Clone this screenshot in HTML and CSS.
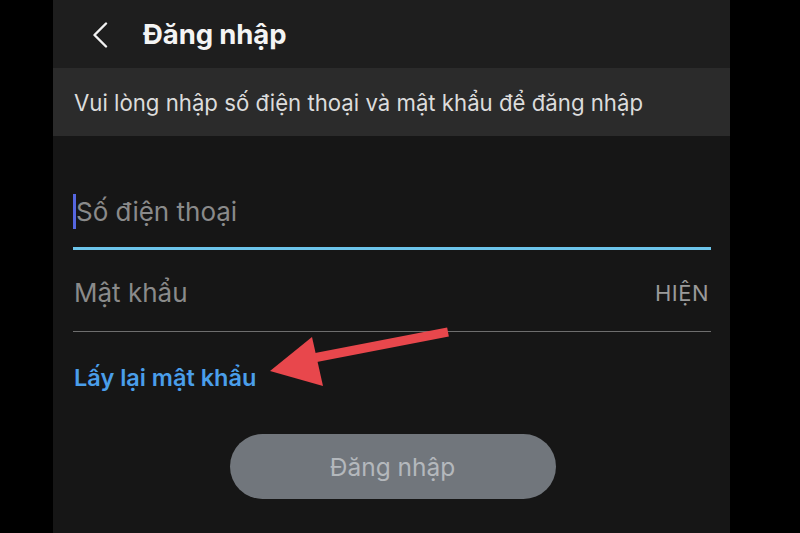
FILE: index.html
```html
<!DOCTYPE html>
<html lang="vi">
<head>
<meta charset="utf-8">
<title>Đăng nhập</title>
<link rel="stylesheet" href="styles.css">
</head>
<body>
<div class="panel">
  <header class="topbar">
    <svg class="back" width="16" height="26" viewBox="0 0 16 26"><path d="M14 1.5 L2.5 13 L14 24.5" fill="none" stroke="#f2f2f2" stroke-width="2.4" stroke-linecap="round" stroke-linejoin="round"/></svg>
    <h1 class="title">Đăng nhập</h1>
  </header>
  <div class="notice">Vui lòng nhập số điện thoại và mật khẩu để đăng nhập</div>
  <main class="form">
    <div class="field field-active">
      <span class="caret"></span><span class="placeholder">Số điện thoại</span>
    </div>
    <div class="field field-pass">
      <span class="placeholder">Mật khẩu</span>
      <span class="show">HIỆN</span>
    </div>
    <a class="forgot">Lấy lại mật khẩu</a>
    <div class="btn-row"><button class="btn">Đăng nhập</button></div>
  </main>
  <svg class="annot" width="677" height="533" viewBox="0 0 677 533">
    <line x1="250" y1="360" x2="395" y2="332" stroke="#e8474c" stroke-width="9" stroke-linecap="butt"/>
    <polygon points="217,371 259,337 270,386" fill="#e8474c"/>
  </svg>
</div>
</body>
</html>
```
FILE: styles.css
```css
html, body {
  margin: 0;
  padding: 0;
  background: #000;
  height: 533px;
  overflow: hidden;
  font-family: Inter, "Noto Sans", "Liberation Sans", sans-serif;
}
.panel {
  position: relative;
  width: 677px;
  height: 533px;
  margin-left: 53px;
  background: #161616;
  display: flex;
  flex-direction: column;
}
.topbar {
  height: 68px;
  background: #1e1e1e;
  display: flex;
  align-items: center;
  padding-left: 39px;
  box-sizing: border-box;
}
.back {
  display: block;
  margin-top: 1px;
}
.title {
  margin: 0 0 0 35px;
  font-size: 27.5px;
  font-weight: 700;
  color: #f4f4f4;
  letter-spacing: -0.1px;
}
.notice {
  height: 68px;
  background: #2b2b2b;
  display: flex;
  align-items: center;
  padding-left: 21px;
  font-size: 22.2px;
  color: #dcdcdc;
  box-sizing: border-box;
}
.form {
  padding: 0 19px 0 20px;
  display: flex;
  flex-direction: column;
}
.field {
  display: flex;
  align-items: center;
  box-sizing: border-box;
}
.field-active {
  margin-top: 40px;
  height: 74px;
  border-bottom: 3px solid #6cc4ea;
}
.caret {
  display: inline-block;
  width: 3px;
  height: 35px;
  background: #5566e0;
}
.placeholder {
  font-size: 26px;
  color: #8a8a8a;
}
.field-pass {
  height: 82px;
  padding-top: 4px;
  border-bottom: 1px solid #6e6e6e;
  justify-content: space-between;
  padding-left: 1px;
}
.show {
  font-size: 22px;
  color: #9a9a9a;
  letter-spacing: 0.5px;
  margin-right: 2px;
}
.forgot {
  margin-top: 32px;
  font-size: 23.5px;
  line-height: 28px;
  font-weight: 600;
  color: #4a9eea;
  padding-left: 1px;
}
.btn-row {
  display: flex;
  justify-content: center;
  margin-top: 42px;
}
.btn {
  width: 326px;
  height: 65px;
  border: none;
  border-radius: 33px;
  background: #71767c;
  color: #b4b8bc;
  font-family: inherit;
  font-size: 24.5px;
  margin-left: 1px;
}
.annot {
  position: absolute;
  left: 0;
  top: 0;
  pointer-events: none;
}
```
